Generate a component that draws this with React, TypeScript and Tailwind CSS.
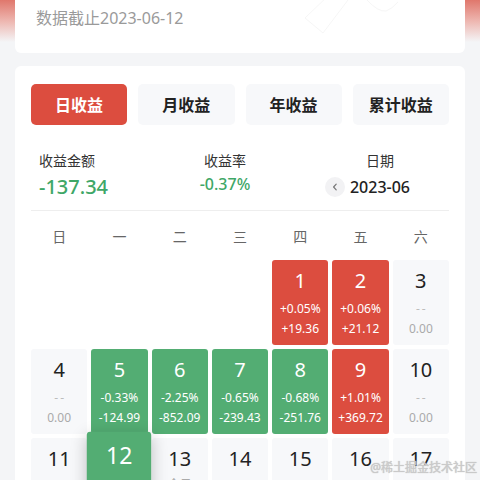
import React from 'react';

type Day = {
  day: number;
  kind: 'up' | 'down' | 'none' | 'blank';
  pct?: string;
  amt?: string;
  today?: boolean;
  note?: string;
};

const TABS = ['日收益', '月收益', '年收益', '累计收益'];
const WEEK = ['日', '一', '二', '三', '四', '五', '六'];

const DAYS: Day[] = [
  { day: 0, kind: 'blank' },
  { day: 0, kind: 'blank' },
  { day: 0, kind: 'blank' },
  { day: 0, kind: 'blank' },
  { day: 1, kind: 'up', pct: '+0.05%', amt: '+19.36' },
  { day: 2, kind: 'up', pct: '+0.06%', amt: '+21.12' },
  { day: 3, kind: 'none' },
  { day: 4, kind: 'none' },
  { day: 5, kind: 'down', pct: '-0.33%', amt: '-124.99' },
  { day: 6, kind: 'down', pct: '-2.25%', amt: '-852.09' },
  { day: 7, kind: 'down', pct: '-0.65%', amt: '-239.43' },
  { day: 8, kind: 'down', pct: '-0.68%', amt: '-251.76' },
  { day: 9, kind: 'up', pct: '+1.01%', amt: '+369.72' },
  { day: 10, kind: 'none' },
  { day: 11, kind: 'none' },
  { day: 12, kind: 'down', pct: '-0.37%', amt: '-137.34', today: true },
  { day: 13, kind: 'none', note: '今日' },
  { day: 14, kind: 'none' },
  { day: 15, kind: 'none' },
  { day: 16, kind: 'none' },
  { day: 17, kind: 'none' },
];

function DayCell({ d }: { d: Day }) {
  if (d.kind === 'blank') return <div className="h-[85px]" />;

  const colored = d.kind === 'up' || d.kind === 'down';
  const bg = d.kind === 'up' ? 'bg-[#dc4d3f]' : d.kind === 'down' ? 'bg-[#53ad73]' : 'bg-[#f7f8fa]';

  return (
    <div
      className={`h-[85px] rounded-[3px] flex flex-col items-center pt-[8px] ${bg} ${
        d.today ? 'relative z-10 scale-[1.15] shadow-[0_4px_14px_rgba(0,0,0,0.22)]' : ''
      }`}
    >
      <span className={`text-[20px] leading-[26px] ${colored ? 'text-white' : 'text-[#222]'}`}>{d.day}</span>
      {colored ? (
        <>
          <span className="mt-[6px] text-[12px] leading-[18px] text-white">{d.pct}</span>
          <span className="mt-[2px] text-[12px] leading-[18px] text-white">{d.amt}</span>
        </>
      ) : d.note ? (
        <span className="mt-[4px] text-[12px] leading-[18px] text-[#aaa]">{d.note}</span>
      ) : (
        <>
          <span className="mt-[6px] text-[12px] leading-[18px] tracking-[2px] pl-[2px] text-[#bdbdbd]">--</span>
          <span className="mt-[2px] text-[12px] leading-[18px] text-[#aaa]">0.00</span>
        </>
      )}
    </div>
  );
}

export default function App() {
  return (
    <div
      className="relative w-[480px] h-[480px] overflow-hidden bg-[linear-gradient(to_bottom,#e0776c_0px,#eeb9b3_22px,#f4f5f7_42px)]"
      style={{ fontFamily: '"Noto Sans", "Noto Sans CJK SC", sans-serif' }}
    >
      {/* header card, scrolled partly out of view */}
      <div className="relative mx-[15px] h-[53px] bg-white rounded-b-[6px] pl-[21px] pt-[6px] overflow-hidden">
        <span className="text-[16px] leading-[24px] text-[#9a9a9a]">数据截止2023-06-12</span>
        <svg className="absolute left-[285px] top-0" width="110" height="36" viewBox="0 0 110 36" fill="none">
          <path d="M5 18 L30 -6 M5 18 L23 33 L48 0" stroke="#f6f6f6" strokeWidth="1" />
          <path d="M67 0 Q78 12 86 11 Q92 9 98 2" stroke="#f6f6f6" strokeWidth="1" />
        </svg>
      </div>

      <div className="mx-[15px] mt-[13px] bg-white rounded-[6px] px-[16px] pt-[18px] pb-[20px]">
        <div className="flex gap-[11px]">
          {TABS.map((t, i) => (
            <div
              key={t}
              className={`flex-1 h-[41px] rounded-[5px] flex items-center justify-center text-[16px] font-bold ${
                i === 0 ? 'bg-[#dc4d3f] text-white' : 'bg-[#f7f8fa] text-[#222]'
              }`}
            >
              {t}
            </div>
          ))}
        </div>

        <div className="flex mt-[26px]">
          <div className="w-[150px] pl-[8px]">
            <div className="text-[14px] leading-[20px] text-[#333]">收益金额</div>
            <div className="mt-[3px] text-[20px] leading-[26px] font-medium text-[#3fa767]">-137.34</div>
          </div>
          <div className="w-[88px] flex flex-col items-center">
            <div className="text-[14px] leading-[20px] text-[#333]">收益率</div>
            <div className="mt-[3px] text-[16px] leading-[20px] font-medium text-[#3fa767]">-0.37%</div>
          </div>
          <div className="ml-auto mr-[19px] w-[100px] flex flex-col items-center">
            <div className="text-[14px] leading-[20px] text-[#333]">日期</div>
            <div className="relative mt-[3px] text-[16px] leading-[26px] font-medium text-[#222]">
              <span className="absolute right-full mr-[5px] top-[3px] w-[20px] h-[20px] rounded-full bg-[#f2f2f4] flex items-center justify-center">
                <svg width="8" height="8" viewBox="0 0 8 8" fill="none">
                  <path d="M5.2 1.2 L2.6 4 L5.2 6.8" stroke="#777" strokeWidth="1.2" strokeLinecap="round" strokeLinejoin="round" />
                </svg>
              </span>
              2023-06
            </div>
          </div>
        </div>

        <div className="mt-[10px] border-t border-[#eeeeee]" />

        <div className="grid grid-cols-7 gap-[4px] mt-[16px] mb-[13px]">
          {WEEK.map((w) => (
            <div key={w} className="text-center text-[14px] leading-[20px] text-[#666]">
              {w}
            </div>
          ))}
        </div>

        <div className="grid grid-cols-7 gap-[4px]">
          {DAYS.map((d, i) => (
            <DayCell key={i} d={d} />
          ))}
        </div>
      </div>

      <div className="absolute right-[3px] bottom-[4px] text-[12px] leading-[16px] text-[#c9c9c9] [text-shadow:0_0_2px_#fff,0_0_1px_#888]">
        @稀土掘金技术社区
      </div>
    </div>
  );
}
